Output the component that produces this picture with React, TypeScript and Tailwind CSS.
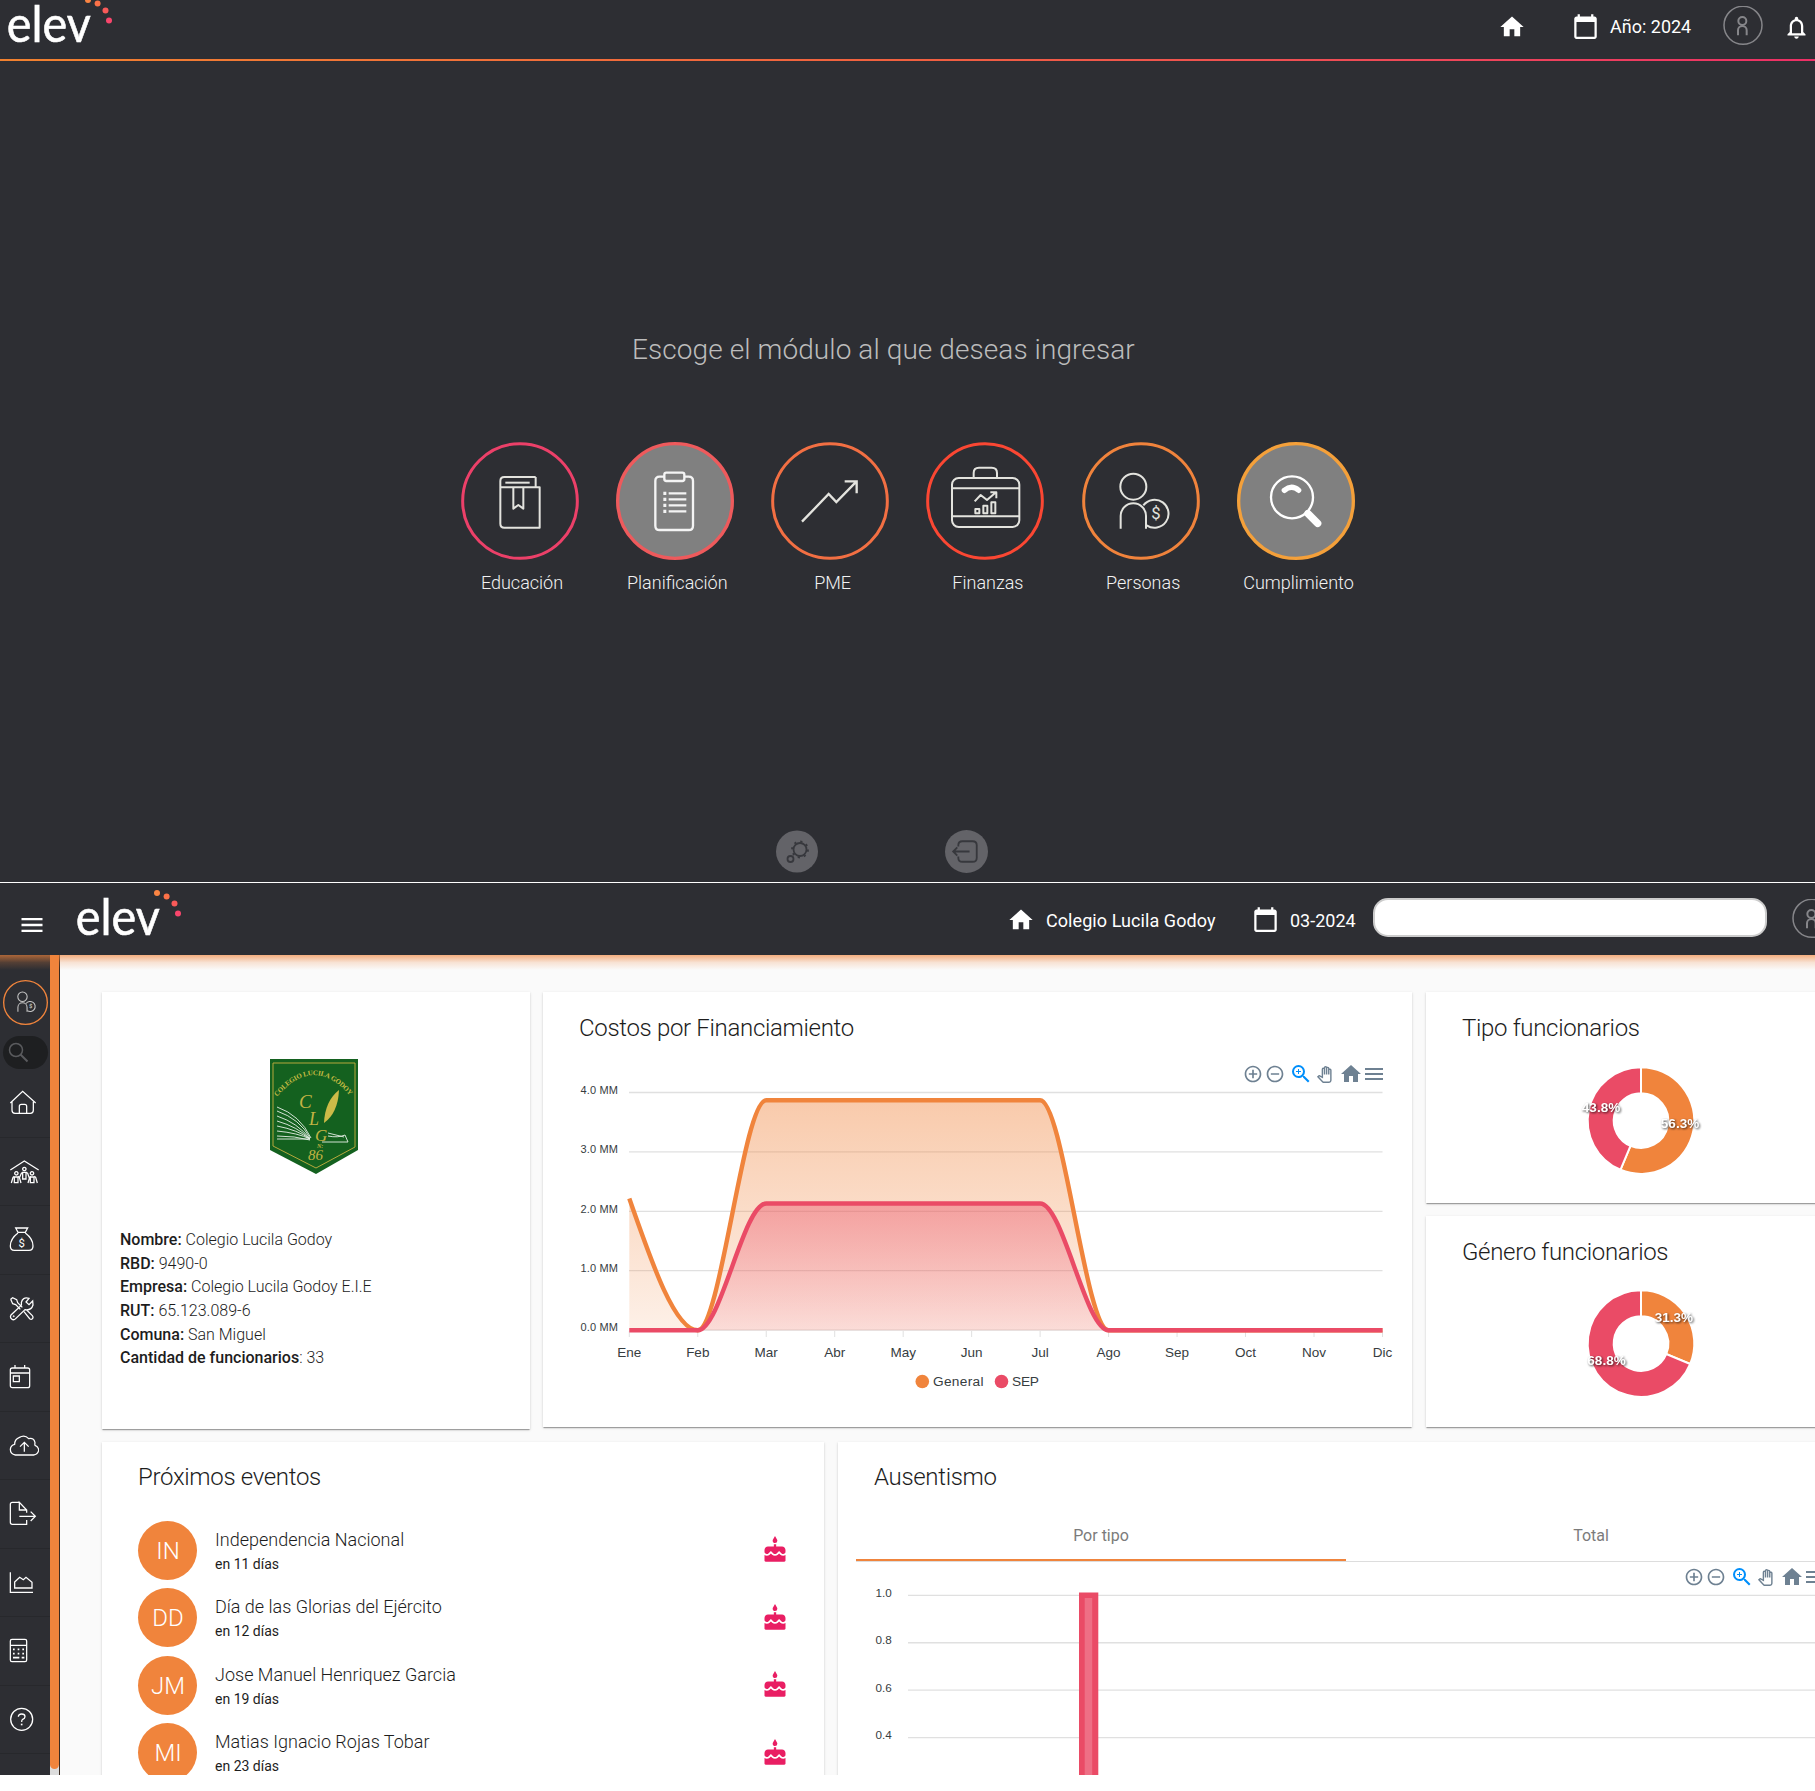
import type { ReactNode } from "react";
import {
  MdAddCircleOutline,
  MdCake,
  MdCalendarToday,
  MdHome,
  MdMenu,
  MdNotificationsNone,
  MdOutlinePanTool,
  MdRemoveCircleOutline,
  MdZoomIn,
} from "react-icons/md";

const ORANGE = "#f0843c";
const PINK = "#ea4b66";

function Logo() {
  return (
    <svg width="120" height="52" viewBox="0 0 120 52" className="block shrink-0 overflow-visible">
      <text
        x="6.8"
        y="41.8"
        fill="#fff"
        stroke="#fff"
        strokeWidth="0.6"
        fontFamily="Lato, sans-serif"
        fontSize="49.5"
        textLength="84"
        lengthAdjust="spacingAndGlyphs"
      >
        elev
      </text>
      <circle cx="88" cy="0" r="3" fill="#fb8543" />
      <circle cx="97.6" cy="3.4" r="3" fill="#fb7148" />
      <circle cx="105.5" cy="10.6" r="3" fill="#f95a59" />
      <circle cx="109" cy="20.5" r="3" fill="#f8466c" />
    </svg>
  );
}

function Avatar() {
  return (
    <svg width="40" height="40" viewBox="0 0 120 120" className="block shrink-0" fill="none" stroke="#86868a" strokeWidth="4.5">
      <circle cx="60" cy="58" r="57" />
      <g strokeWidth="6">
        <circle cx="58" cy="45" r="12" />
        <path d="M45 88V73a13 13 0 0 1 26 0v15" />
      </g>
    </svg>
  );
}

/* Module artwork, drawn on a 354 unit square */
function ModuleCircle({ color, filled, children }: { color: string; filled?: boolean; children: ReactNode }) {
  return (
    <svg width="118" height="118" viewBox="0 0 354 354" fill="none" className="block">
      <circle cx="177" cy="177" r="172" stroke={color} strokeWidth={filled ? 10 : 9} fill={filled ? "#808080" : "none"} />
      <g stroke="#e3e3de" strokeWidth="6" strokeLinejoin="round">
        {children}
      </g>
    </svg>
  );
}

const person = (
  <>
    <circle cx="154" cy="134" r="39" />
    <path d="M116 260v-38a38 38 0 0 1 76 0v38" />
    <path d="M184 190a42 42 0 1 1 10 60" />
    <text x="222" y="232" textAnchor="middle" fontSize="50" fontFamily="Roboto, sans-serif" fill="#e3e3de" stroke="none">
      $
    </text>
  </>
);

const modules = [
  {
    label: "Educación",
    color: "#ec4069",
    art: (
      <g transform="translate(-62 -396)">
        <path d="M286 501H192q-12 0-12 12v128q0 12 12 12h106V532H180M286 501v31" />
        <path d="M195 518h73" />
        <path d="M219 532v64l15-11 15 11v-64" />
      </g>
    ),
  },
  {
    label: "Planificación",
    color: "#ee5a5c",
    filled: true,
    art: (
      <g transform="translate(-529 -396)" strokeWidth="7" stroke="#f4f4f4">
        <path d="M674 500h-14q-13 0-13 13v134q0 13 13 13h87q13 0 13-13V513q0-13-13-13h-13" />
        <rect x="674" y="488" width="60" height="25" rx="6" />
        <path d="M687 550h53M687 568h53M687 586h53M687 604h53" />
        <path strokeWidth="10" d="M671 550h9M671 568h9M671 586h9M671 604h9" />
      </g>
    ),
  },
  {
    label: "PME",
    color: "#f26f43",
    art: (
      <g transform="translate(-994 -396)" strokeWidth="7">
        <path d="M1087 635l80-83 23 24 60-61M1215 514h36v36" strokeLinejoin="miter" />
      </g>
    ),
  },
  {
    label: "Finanzas",
    color: "#fb4733",
    art: (
      <g transform="translate(-82 -396)">
        <rect x="160" y="504" width="202" height="147" rx="20" />
        <path d="M225 503v-14q0-16 16-16h38q16 0 16 16v14M160 535h202M160 619h202" />
        <path d="M228 574l18-19 19 15 27-23M275 547h18v18" />
        <path d="M230 597h12v13h-12zM254 587h12v23h-12zM278 577h12v33h-12z" />
      </g>
    ),
  },
  { label: "Personas", color: "#f0833c", art: person },
  {
    label: "Cumplimiento",
    color: "#f4a03a",
    filled: true,
    art: (
      <g transform="translate(-1011 -396)" stroke="#fff" strokeLinecap="round">
        <circle cx="1176" cy="562" r="63" strokeWidth="7" />
        <path d="M1153 541q22-18 43 0" strokeWidth="16" />
        <path d="M1219 606l6 6" strokeWidth="9" />
        <path d="M1224 611l29 29" strokeWidth="22" />
      </g>
    ),
  },
];

const sideIcons: ReactNode[] = [
  <path d="M4 48L41 13L80 48M9 44v26q0 9 9 9h46q9 0 9-9V44M31 79V58q0-6 6-6h10q6 0 6 6v21" />,
  <path d="M4 42L46 15L89 42M41 49h10v20h-10zM16 63h11v17H16zM64 63h11v17H64zM7 81l5-17 4-3M36 81l-5-17-4-3M31 66l6-14 4-3M61 66l-5-14-4-3M57 81l5-17 4-3M85 81l-5-17-4-3M46 34a5 5 0 1 0 .1 0M22 47a5 5 0 1 0 .1 0M69 47a5 5 0 1 0 .1 0" />,
  <>
    <path d="M20 12h36l-7 13H27zM27 27Q4 44 4 66q0 13 12 13h44q12 0 12-13Q72 44 49 27" />
    <text x="38" y="69" textAnchor="middle" fontSize="34" fontFamily="Roboto, sans-serif" fill="#fff" stroke="none">
      $
    </text>
  </>,
  <path d="M5 19l6-5 12 6 3 9 14 14M34 49L20 35l-9-3-6-13M71 24L60 35l-9-8 9-11q-20-5-23 13 1 6-1 9L6 66q-4 7 2 12 6 5 12-1L48 50q19 3 24-14zM45 56l17 21q7 5 10-3 0-4-2-6L53 51M14 69a1 1 0 1 0 .1 0" />,
  <path d="M10 21h46q6 0 6 6v47q0 6-6 6H10q-6 0-6-6V27q0-6 6-6zM4 36h58M18 12v9M47 12v9M13 45h18v17H13z" />,
  <path d="M19 75Q4 73 4 58q1-12 13-15 0-15 13-20 17-10 29 3 16-4 19 12-1 6 0 8 11 5 11 15-2 12-15 14zM46 65V37M33 50l13-13 13 13" />,
  <path d="M31 13H10q-6 0-6 6v54q0 6 6 6h43V66M53 44V36L31 13v23h22M31 55h47M65 41l14 14-14 14" />,
  <path d="M4 16v60h68M17 45l15-14 11 7 8-7 18 15v17H17z" />,
  <>
    <path d="M9 13h39q5 0 5 5v57q0 5-5 5H9q-5 0-5-5V18q0-5 5-5zM4 31h49" />
    <path d="M12 43h5M26 43h5M40 43h5M12 56h5M26 56h5M40 56h5M12 68h19M38 68h8" strokeWidth="5" />
  </>,
  <>
    <circle cx="38" cy="46" r="33" />
    <path d="M28 38q0-8 10-8 10 0 10 8 0 5-8 9-2 2-2 7" />
    <path d="M38 59v5" strokeWidth="5" />
  </>,
];

function Card({ className, children }: { className: string; children: ReactNode }) {
  return (
    <div
      className={
        "overflow-hidden bg-white shadow-[0_2px_1px_-1px_rgba(0,0,0,0.2),0_1px_1px_0_rgba(0,0,0,0.14),0_1px_3px_0_rgba(0,0,0,0.12)] " + className
      }
    >
      {children}
    </div>
  );
}

function CardTitle({ children }: { children: ReactNode }) {
  return <h2 className="h-6 whitespace-nowrap text-[24px] leading-[26px] font-light tracking-[-0.32px] text-[#1d1d1d]">{children}</h2>;
}

function Toolbar() {
  return (
    <div className="flex items-center text-[#6e8192]">
      <MdAddCircleOutline size={20} />
      <MdRemoveCircleOutline size={20} className="ml-[2px]" />
      <MdZoomIn size={24} className="ml-1 text-[#008ffb]" />
      <MdOutlinePanTool size={17} className="ml-[3px]" />
      <MdHome size={24} className="ml-[6px]" />
      <MdMenu size={24} className="-ml-[1.5px] shrink-0" />
    </div>
  );
}

const months = ["Ene", "Feb", "Mar", "Abr", "May", "Jun", "Jul", "Ago", "Sep", "Oct", "Nov", "Dic"];

function CostChart() {
  const step = 68.47;
  const x = (i: number) => 86.3 + i * step;
  const base = 271.3;
  const hill = (top: number) =>
    `L${x(1)} ${base}C${x(1.333)} ${base} ${x(1.667)} ${top} ${x(2)} ${top}L${x(6)} ${top}C${x(6.333)} ${top} ${x(6.667)} ${base} ${x(7)} ${base}`;
  const general = `M${x(0)} 139.5C${x(0.333)} 205 ${x(0.667)} ${base} ${x(1)} ${base}${hill(41.2)}`;
  const sep = `M${x(0)} ${base}${hill(144.5)}`;
  return (
    <svg width="869" height="358" viewBox="0 0 869 358" className="block" fontFamily="'Liberation Sans', sans-serif" fill="#373d3f">
      <defs>
        <linearGradient id="g1" x1="0" y1="0" x2="0" y2="1">
          <stop offset="0" stopColor={ORANGE} stopOpacity="0.43" />
          <stop offset="1" stopColor={ORANGE} stopOpacity="0.12" />
        </linearGradient>
        <linearGradient id="g2" x1="0" y1="0" x2="0" y2="1">
          <stop offset="0" stopColor={PINK} stopOpacity="0.41" />
          <stop offset="1" stopColor={PINK} stopOpacity="0.12" />
        </linearGradient>
      </defs>
      {["4.0 MM", "3.0 MM", "2.0 MM", "1.0 MM", "0.0 MM"].map((t, i) => (
        <g key={t}>
          <path d={`M86 ${33.5 + i * 59.4}H839.5`} stroke="#e0e0e0" strokeWidth="1.3" />
          <text x="37.5" y={34.7 + i * 59.4} fontSize="11" textLength="37.5">
            {t}
          </text>
        </g>
      ))}
      {months.map((m, i) => (
        <g key={m}>
          <path d={`M${x(i)} 272v6`} stroke="#e0e0e0" />
          <text x={x(i)} y="298.3" fontSize="13.5" textAnchor="middle">
            {m}
          </text>
        </g>
      ))}
      <path d={general + "H86.3Z"} fill="url(#g1)" />
      <path d={general + `H${x(11)}`} fill="none" stroke={ORANGE} strokeWidth="4.4" />
      <path d={sep + "H86.3Z"} fill="url(#g2)" />
      <path d={sep + `H${x(11)}`} fill="none" stroke={PINK} strokeWidth="4.4" />
      <circle cx="379.3" cy="322.5" r="6.8" fill={ORANGE} />
      <text x="390" y="327.3" fontSize="13.7" textLength="50.5">
        General
      </text>
      <circle cx="458.5" cy="322.5" r="6.8" fill={PINK} />
      <text x="469" y="327.3" fontSize="13.7" textLength="27">
        SEP
      </text>
    </svg>
  );
}

function Donut({ share, labels }: { share: number; labels: { t: string; x: number; y: number }[] }) {
  const a = share * 2 * Math.PI;
  const R = 53.3;
  const r = 27.3;
  const seg = (a0: number, a1: number) => {
    const p = (q: number, rad: number) => `${60 + rad * Math.sin(q)} ${60.6 - rad * Math.cos(q)}`;
    const big = a1 - a0 > Math.PI ? 1 : 0;
    return `M${p(a0, R)}A${R} ${R} 0 ${big} 1 ${p(a1, R)}L${p(a1, r)}A${r} ${r} 0 ${big} 0 ${p(a0, r)}Z`;
  };
  return (
    <svg width="120" height="120" viewBox="0 0 120 120" className="block overflow-visible">
      <path d={seg(0, a)} fill={ORANGE} stroke="#fff" strokeWidth="2" />
      <path d={seg(a, 2 * Math.PI)} fill={PINK} stroke="#fff" strokeWidth="2" />
      {labels.map((l) => (
        <text
          key={l.t}
          x={l.x}
          y={l.y}
          textAnchor="middle"
          fontFamily="'Liberation Sans', sans-serif"
          fontSize="13.5"
          fontWeight="700"
          fill="#fff"
          className="[filter:drop-shadow(1px_1px_1px_rgba(0,0,0,0.7))]"
        >
          {l.t}
        </text>
      ))}
    </svg>
  );
}

function Crest() {
  return (
    <svg width="88" height="115" viewBox="0 0 88 115" className="block" fill="none">
      <defs>
        <path id="arc" d="M7 38Q44 -6 81 38" />
      </defs>
      <path d="M0 0h88v91l-42 24L0 91z" fill="#14611f" />
      <path d="M3 4h82v84L46 109 3 87z" stroke="#b5a83c" />
      <text fontFamily="'Liberation Serif', serif" fontWeight="700" fontSize="7" fill="#c8bd44">
        <textPath href="#arc" textLength="87">
          COLEGIO LUCILA GODOY
        </textPath>
      </text>
      <path
        d="M7 48Q30 56 41 79M7 52Q30 60 40 79M7 57Q28 64 40 80M7 62Q28 68 40 80M7 67Q28 71 40 80M7 72Q28 74 40 80M7 77Q25 77 40 81M7 80h33M58 77q10 2 17-1l3 7H52M58 74l16 4"
        stroke="#e6efe6"
        strokeWidth="0.9"
      />
      <path d="M69 31Q55 42 54 64q14-10 15-33z" fill="#cdbb48" />
      <g fontFamily="'Liberation Serif', serif" fontStyle="italic" fill="#c3b444">
        <text x="29" y="49" fontSize="19">C</text>
        <text x="39" y="66" fontSize="18">L</text>
        <text x="45" y="82" fontSize="17">G</text>
        <text x="47" y="89" fontSize="6" fontWeight="700">N:</text>
        <text x="38" y="101" fontSize="15">86</text>
      </g>
    </svg>
  );
}

const info = [
  ["Nombre:", " Colegio Lucila Godoy"],
  ["RBD:", " 9490-0"],
  ["Empresa:", " Colegio Lucila Godoy E.I.E"],
  ["RUT:", " 65.123.089-6"],
  ["Comuna:", " San Miguel"],
  ["Cantidad de funcionarios", ": 33"],
];

const events = [
  ["IN", "Independencia Nacional", "en 11 días"],
  ["DD", "Día de las Glorias del Ejército", "en 12 días"],
  ["JM", "Jose Manuel Henriquez Garcia", "en 19 días"],
  ["MI", "Matias Ignacio Rojas Tobar", "en 23 días"],
];

function ModulePicker() {
  return (
    <section className="flex h-[882px] shrink-0 flex-col bg-[#2d2e33]">
      <header className="flex h-[58px] shrink-0 items-start overflow-hidden text-white">
        <Logo />
        <div className="ml-auto flex h-[52px] items-center">
          <MdHome size={28} className="mt-px mr-[46px]" />
          <MdCalendarToday size={27} />
          <span className="mt-[2px] ml-[11px] w-[113px] whitespace-nowrap text-[18px] leading-7">Año: 2024</span>
          <Avatar />
          <MdNotificationsNone size={27} className="mt-[3px] ml-5 mr-[5px]" />
        </div>
      </header>
      <div className="mt-px h-[2px] shrink-0 bg-linear-to-r from-[#f0812f] via-[#f0603f] to-[#ec2f66]" />
      <h1 className="mt-[273px] ml-[632px] h-8 whitespace-nowrap text-[28px] leading-8 font-light tracking-[0.08px] text-[#bcbcbc]">
        Escoge el módulo al que deseas ingresar
      </h1>
      <div className="mt-[76px] ml-[460px] flex gap-[37.3px]">
        {modules.map((m) => (
          <div key={m.label} className="flex w-[118px] flex-col items-center">
            <div className="pl-px">
              <ModuleCircle color={m.color} filled={m.filled}>
                {m.art}
              </ModuleCircle>
            </div>
            <span className="mt-[11px] pl-[6px] whitespace-nowrap text-[18px] leading-6 font-light text-[#f2f2f2]">{m.label}</span>
          </div>
        ))}
      </div>
      <div className="mt-auto mb-[9px] ml-[776px] flex gap-[127px]">
        <svg width="42" height="43" viewBox="0 0 42 42" fill="none" stroke="#37383d" strokeWidth="1.8">
          <circle cx="21" cy="21" r="21" fill="#636368" stroke="none" />
          <circle cx="24" cy="19" r="6.5" />
          <circle cx="24" cy="19" r="8" strokeDasharray="2.2 4.08" />
          <circle cx="14.5" cy="28.5" r="3" />
        </svg>
        <svg width="43" height="43" viewBox="0 0 42 42" fill="none" stroke="#37383d" strokeWidth="1.8">
          <circle cx="21" cy="21" r="21" fill="#636368" stroke="none" />
          <path d="M13 16v-1q0-4 4-4h10q4 0 4 4v12q0 4-4 4H17q-4 0-4-4v-1M8 21h16M12 17l-4 4 4 4" />
        </svg>
      </div>
    </section>
  );
}

function Sidebar() {
  return (
    <aside className="flex w-[60px] shrink-0 border-r border-[#3a2a20] bg-[#2d2e33]">
      <div className="flex w-[50px] shrink-0 flex-col overflow-hidden">
        <svg width="45" height="45" viewBox="0 0 135 135" fill="none" className="mt-[25px] ml-[3px] shrink-0">
          <circle cx="67.5" cy="67.5" r="65.5" stroke={ORANGE} strokeWidth="4" />
          <g transform="translate(3 2) scale(.36)" stroke="#c4c4c4" strokeWidth="9">
            {person}
          </g>
        </svg>
        <div className="mt-[11px] ml-[3px] flex h-[33px] w-[45px] shrink-0 items-center rounded-full bg-[#1e1f21] pl-[5px]">
          <svg width="22" height="22" viewBox="0 0 22 22" fill="none" stroke="#5a5b5e" strokeWidth="1.5">
            <circle cx="8" cy="8" r="6.5" />
            <path d="M12.5 12.5l7 7" strokeWidth="2" />
          </svg>
        </div>
        {sideIcons.map((icon, i) => (
          <div key={i} className="flex h-[68.55px] shrink-0 items-center border-b border-[#27282c] pb-[1.5px] pl-[9px]">
            <svg width="30" height="30" viewBox="0 0 90 90" fill="none" stroke="#fff" strokeWidth="3.8">
              {icon}
            </svg>
          </div>
        ))}
      </div>
      <div className="flex w-[9px] shrink-0 bg-[#dcdcdc] pb-[6px]">
        <div className="w-full rounded-b-full bg-[#f0843c]" />
      </div>
    </aside>
  );
}

function Dashboard() {
  return (
    <section className="flex h-[893px] w-[1815px] shrink-0 flex-col overflow-hidden border-t border-white bg-[#fafafa]">
      <header className="relative z-10 flex h-[72px] shrink-0 items-center bg-[#2d2e33] text-white">
        <MdMenu size={28} className="mt-[11px] ml-[18px] shrink-0" />
        <div className="ml-[23px] h-[52px] w-[120px] shrink-0">
          <Logo />
        </div>
        <MdHome size={28} className="mt-px ml-[818px] shrink-0" />
        <span className="mt-[3px] ml-[11px] w-[206px] shrink-0 whitespace-nowrap text-[18px] leading-7 tracking-[0.07px]">
          Colegio Lucila Godoy
        </span>
        <MdCalendarToday size={27} className="mt-px shrink-0" />
        <span className="mt-[3px] ml-[11px] w-[83px] shrink-0 whitespace-nowrap text-[18px] leading-7">03-2024</span>
        <div className="-mt-1 h-[39px] w-[394px] shrink-0 rounded-[15px] border-2 border-[#cccccc] bg-white" />
        <div className="ml-[25px] shrink-0">
          <Avatar />
        </div>
        <div className="absolute inset-x-0 top-full h-[15px] bg-linear-to-b from-[#f0843c]/65 via-[#f0843c]/20 to-transparent" />
      </header>
      <div className="flex min-h-0 flex-1">
        <Sidebar />
        <main className="flex w-[1755px] shrink-0 flex-col gap-[13px] pt-[37px] pl-[42px]">
          <div className="flex h-[437px] shrink-0 gap-[13px]">
            <Card className="w-[428px] shrink-0 px-[18px]">
              <div className="mt-[67px] ml-[150px]">
                <Crest />
              </div>
              <dl className="mt-[54px] text-[16px] leading-[23.65px] font-light text-[#1d1d1d]">
                {info.map(([k, v]) => (
                  <div key={k} className="whitespace-pre">
                    <dt className="inline font-medium">{k}</dt>
                    <dd className="inline">{v}</dd>
                  </div>
                ))}
              </dl>
            </Card>
            <Card className="h-[435px] w-[869px] shrink-0 pt-[23px]">
              <div className="ml-[36px]">
                <CardTitle>Costos por Financiamiento</CardTitle>
              </div>
              <div className="relative">
                <div className="absolute top-[23px] left-[700px]">
                  <Toolbar />
                </div>
                <div className="pt-[20px]">
                  <CostChart />
                </div>
              </div>
            </Card>
            <div className="ml-px flex shrink-0 flex-col gap-[13px]">
              <Card className="h-[211px] w-[430px] pt-[23px] pl-[36px]">
                <CardTitle>Tipo funcionarios</CardTitle>
                <div className="mt-[21px] ml-[119px]">
                  <Donut
                    share={0.563}
                    labels={[
                      { t: "56.3%", x: 99, y: 68.3 },
                      { t: "43.8%", x: 20, y: 52.3 },
                    ]}
                  />
                </div>
              </Card>
              <Card className="h-[211px] w-[430px] pt-[23px] pl-[36px]">
                <CardTitle>Género funcionarios</CardTitle>
                <div className="mt-[20px] ml-[119px]">
                  <Donut
                    share={0.3125}
                    labels={[
                      { t: "31.3%", x: 92.8, y: 38.5 },
                      { t: "68.8%", x: 25.5, y: 82.2 },
                    ]}
                  />
                </div>
              </Card>
            </div>
          </div>
          <div className="flex h-[420px] shrink-0 gap-[14px]">
            <Card className="w-[722px] shrink-0 pt-[22px] pl-[36px]">
              <CardTitle>Próximos eventos</CardTitle>
              <ul className="mt-[32.5px]">
                {events.map(([ini, name, when]) => (
                  <li key={ini} className="flex h-[67.5px] items-start">
                    <div className="flex size-[59px] shrink-0 items-center justify-center rounded-full bg-[#f0843c] pt-px pl-px text-[24px] font-light text-white">
                      {ini}
                    </div>
                    <div className="ml-[18px] w-[546px] pt-[7px] whitespace-nowrap text-[#1d1d1d]">
                      <p className="text-[18px] leading-6 font-light">{name}</p>
                      <p className="mt-[2px] text-[14px] leading-5">{when}</p>
                    </div>
                    <MdCake size={28} color="#e91e63" className="mt-[15.5px]" />
                  </li>
                ))}
              </ul>
            </Card>
            <Card className="w-[1010px] shrink-0 pt-[22px]">
              <div className="ml-[36px]">
                <CardTitle>Ausentismo</CardTitle>
              </div>
              <div className="mt-[22px] ml-[18px] flex border-b border-[#dddddd] text-center text-[16px] leading-[51px] text-[#7b7b7b]">
                <div className="h-[51px] w-[490px] border-b-2 border-[#f0843c]">Por tipo</div>
                <div className="h-[51px] w-[490px]">Total</div>
              </div>
              <div className="mt-[3px] ml-[846px] w-[160px]">
                <Toolbar />
              </div>
              <svg
                width="1010"
                height="240"
                viewBox="0 0 1010 240"
                className="-mt-2 block"
                fontFamily="'Liberation Sans', sans-serif"
                fill="#373d3f"
              >
                {["1.0", "0.8", "0.6", "0.4"].map((t, i) => (
                  <g key={t}>
                    <path d={`M70 ${14.3 + i * 47.45}H1010`} stroke="#e0e0e0" strokeWidth="1.3" />
                    <text x="37.5" y={15.6 + i * 47.45} fontSize="11.7">
                      {t}
                    </text>
                  </g>
                ))}
                <path d="M241 11.5h19.3V240H241z" fill={PINK} />
                <path d="M246.7 17h7.5V240h-7.5z" fill="#ee6f85" />
              </svg>
            </Card>
          </div>
        </main>
      </div>
    </section>
  );
}

export default function App() {
  return (
    <div className="flex h-[1791px] w-[1815px] flex-col overflow-hidden bg-white font-['Roboto',sans-serif]">
      <ModulePicker />
      <Dashboard />
    </div>
  );
}
